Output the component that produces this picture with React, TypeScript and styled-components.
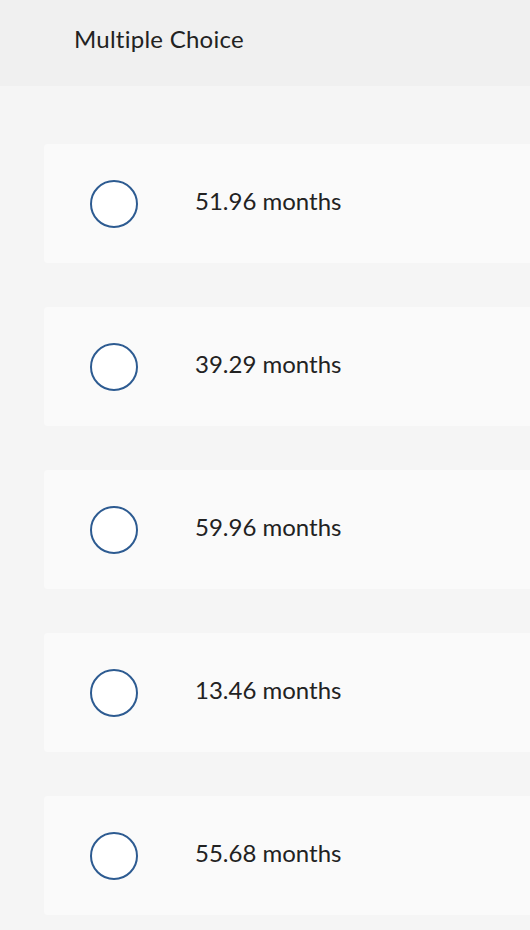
import React from "react";
import styled, { createGlobalStyle } from "styled-components";

const GlobalStyle = createGlobalStyle`
  html, body {
    margin: 0;
    padding: 0;
    background: #f5f5f5;
  }
  body {
    font-family: Lato, "Open Sans", "Liberation Sans", sans-serif;
    font-variant-ligatures: none;
    color: #222222;
  }
`;

const options = [
  "51.96 months",
  "39.29 months",
  "59.96 months",
  "13.46 months",
  "55.68 months",
];

export default function App() {
  return (
    <>
      <GlobalStyle />
      <Page>
        <Header>
          <Title>Multiple Choice</Title>
        </Header>
        <ChoiceList>
          {options.map((label) => (
            <ChoiceCard key={label}>
              <Radio />
              <ChoiceText>{label}</ChoiceText>
            </ChoiceCard>
          ))}
        </ChoiceList>
      </Page>
    </>
  );
}

const Page = styled.div`
  width: 530px;
  min-height: 930px;
  background: #f5f5f5;
  overflow: hidden;
`;

const Header = styled.div`
  height: 86px;
  background: #f0f0f0;
  display: flex;
  align-items: center;
  padding-left: 74px;
  box-sizing: border-box;
`;

const Title = styled.h1`
  margin: 0 0 10px;
  font-size: 24px;
  font-weight: 400;
  letter-spacing: 0.25px;
  color: #222222;
`;

const ChoiceList = styled.div`
  display: flex;
  flex-direction: column;
  gap: 44px;
  padding: 58px 0 0 44px;
`;

const ChoiceCard = styled.div`
  height: 119px;
  width: 520px;
  background: #fafafa;
  border-radius: 4px;
  display: flex;
  align-items: center;
  padding-left: 46px;
  box-sizing: border-box;
`;

const Radio = styled.span`
  width: 48px;
  height: 48px;
  box-sizing: border-box;
  border: 2px solid #2d5b91;
  border-radius: 50%;
  background: #ffffff;
  flex-shrink: 0;
`;

const ChoiceText = styled.span`
  margin-left: 57px;
  margin-bottom: 6px;
  font-size: 24px;
  color: #222222;
`;
